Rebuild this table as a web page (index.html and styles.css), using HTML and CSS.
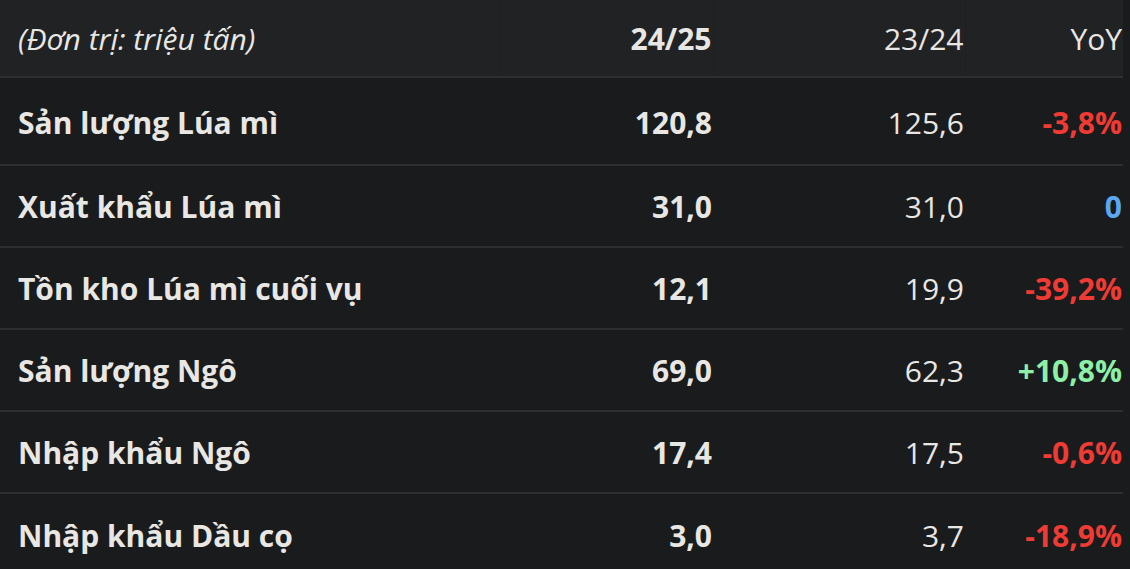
FILE: index.html
```html
<!DOCTYPE html>
<html lang="vi">
<head>
<meta charset="utf-8">
<link rel="stylesheet" href="styles.css">
</head>
<body>
<table class="tbl">
  <colgroup>
    <col class="w-name">
    <col class="w-cur">
    <col class="w-prev">
    <col class="w-yoy">
  </colgroup>
  <thead>
    <tr>
      <th class="c-name unit">(Đơn trị: triệu tấn)</th>
      <th class="c-cur">24/25</th>
      <th class="c-prev">23/24</th>
      <th class="c-yoy">YoY</th>
    </tr>
  </thead>
  <tbody>
    <tr><td class="c-name">Sản lượng Lúa mì</td><td class="c-cur">120,8</td><td class="c-prev">125,6</td><td class="c-yoy neg">-3,8%</td></tr>
    <tr><td class="c-name">Xuất khẩu Lúa mì</td><td class="c-cur">31,0</td><td class="c-prev">31,0</td><td class="c-yoy zero">0</td></tr>
    <tr><td class="c-name">Tồn kho Lúa mì cuối vụ</td><td class="c-cur">12,1</td><td class="c-prev">19,9</td><td class="c-yoy neg">-39,2%</td></tr>
    <tr><td class="c-name">Sản lượng Ngô</td><td class="c-cur">69,0</td><td class="c-prev">62,3</td><td class="c-yoy pos">+10,8%</td></tr>
    <tr><td class="c-name">Nhập khẩu Ngô</td><td class="c-cur">17,4</td><td class="c-prev">17,5</td><td class="c-yoy neg">-0,6%</td></tr>
    <tr><td class="c-name">Nhập khẩu Dầu cọ</td><td class="c-cur">3,0</td><td class="c-prev">3,7</td><td class="c-yoy neg">-18,9%</td></tr>
  </tbody>
</table>
</body>
</html>
```
FILE: styles.css
```css
html, body {
  margin: 0;
  padding: 0;
  background: #1a1b1d;
}
body {
  font-family: "Open Sans", "Noto Sans", sans-serif;
  color: #e9e7e4;
  overflow: hidden;
}
.tbl {
  width: 1123px;
  border-collapse: collapse;
  table-layout: fixed;
}
.w-name { width: 500px; }
.w-cur { width: 213px; }
.w-prev { width: 252px; }
.w-yoy { width: 158px; }
.tbl th, .tbl td {
  padding: 0 1px 0 18px;
  font-size: 30px;
  white-space: nowrap;
  box-sizing: border-box;
}
.tbl thead tr {
  background: #212224;
  height: 77px;
}
.tbl thead th {
  font-weight: 400;
  border-bottom: 2px solid #2d2e30;
  border-left: 1px solid #1e1f21;
}
.tbl thead th:first-child { border-left: none; }
.tbl tbody tr {
  height: 82px;
}
.tbl tbody tr:first-child {
  height: 88px;
}
.tbl tbody td {
  border-top: 2px solid #2d2e30;
  padding-top: 1px;
}
.tbl tbody tr:first-child td { border-top: none; padding-top: 3px; }
.c-name { text-align: left; font-weight: 700; }
.c-cur { text-align: right; font-weight: 700; }
.c-prev { text-align: right; font-weight: 400; }
.c-yoy { text-align: right; font-weight: 700; }
.tbl thead .c-cur { font-weight: 700; }
.tbl thead .c-yoy { font-weight: 400; }
.unit { font-style: italic; font-weight: 400 !important; }
.neg { color: #ef3b33; }
.pos { color: #8cf0a6; }
.zero { color: #5aa7f2; }
```
